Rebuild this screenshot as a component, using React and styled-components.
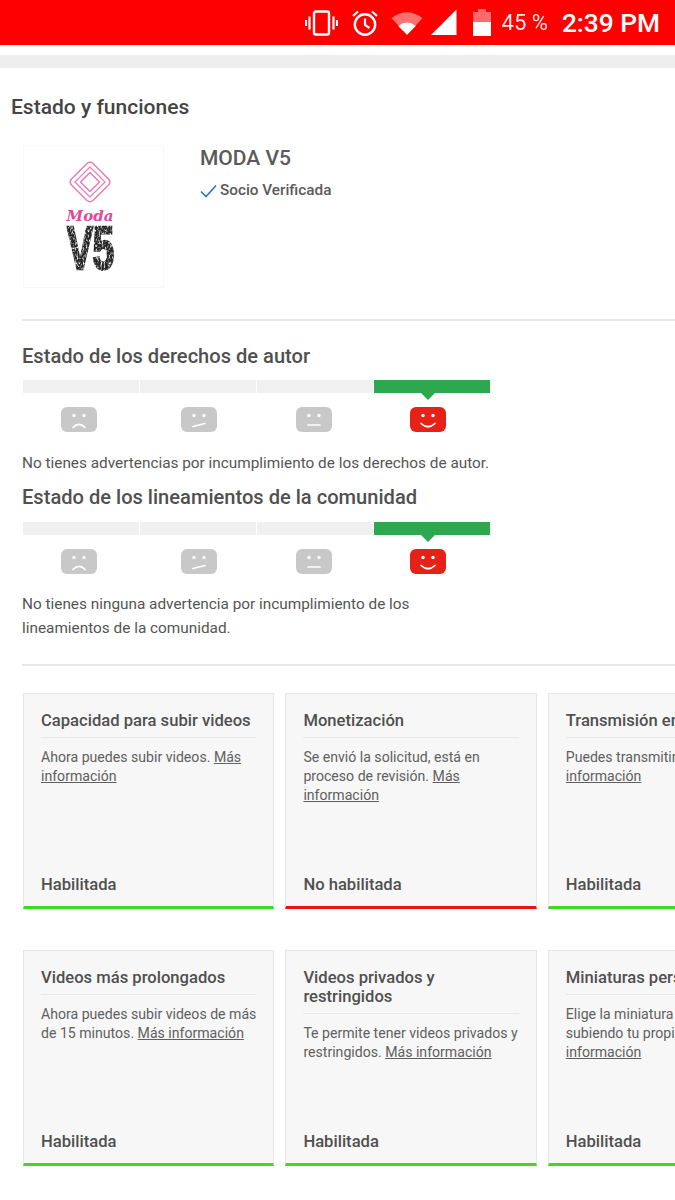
import React from 'react'
import styled, { createGlobalStyle } from 'styled-components'

const Global = createGlobalStyle`
html, body {
    margin: 0;
    background: #fff;
    overflow: hidden;
}
body {
    font-family: Roboto, "Liberation Sans", sans-serif;
    color: #4a4a4a;
}
`

const Page = styled.div`
width: 675px;
height: 1200px;
overflow: hidden;
`

const StatusBar = styled.div`
height: 45px;
background: #fe0000;
display: flex;
align-items: center;
justify-content: flex-end;
padding-right: 15px;
color: #fff;
`
const StatusIcon = styled.svg`
display: block;
flex: none;
margin-right: ${p => p.$gap}px;
`
const Percent = styled.span`
font-size: 22px;
margin-right: 14px;
opacity: .92;
`
const Clock = styled.span`
font-size: 26.3px;
font-weight: 500;
`

const Band = styled.div`
height: 13px;
margin-top: 10px;
background: #eeeeee;
`

const PageTitle = styled.h1`
margin: 27px 0 0 11px;
font-size: 21px;
line-height: 24px;
font-weight: 500;
color: #444;
`

const Content = styled.div`
padding-left: 22px;
`

const Profile = styled.div`
display: flex;
margin-top: 26px;
height: 174px;
border-bottom: 2px solid #e8e8e8;
`
const LogoBox = styled.div`
box-sizing: border-box;
width: 141px;
height: 143px;
margin-left: 1px;
padding-right: 7px;
border: 1px solid #f8f8f8;
display: flex;
flex-direction: column;
align-items: center;
`
const LogoMark = styled.svg`
display: block;
margin-top: 15px;
`
const LogoScript = styled.span`
font-family: "DejaVu Serif", serif;
font-style: italic;
font-weight: 700;
font-size: 15px;
line-height: 15px;
margin-top: 6px;
color: #dc4a9c;
`
const LogoV5 = styled.span`
font-family: "Liberation Sans", sans-serif;
font-weight: 700;
font-size: 61px;
line-height: 46px;
margin-top: 1px;
letter-spacing: -1px;
color: #262626;
-webkit-text-stroke: 2.5px #262626;
transform: scaleX(.64);
filter: url(#grunge);
`
const ProfileText = styled.div`
margin-left: 36px;
`
const ChannelName = styled.div`
margin-top: 1px;
font-size: 21px;
line-height: 24px;
font-weight: 500;
color: #5a5a5a;
`
const Verified = styled.div`
display: flex;
align-items: center;
gap: 3px;
margin-top: 10px;
font-size: 15.3px;
line-height: 21px;
font-weight: 500;
color: #5a5a5a;
`

const SectionTitle = styled.h2`
margin: ${p => p.$top}px 0 0;
font-size: 20.1px;
line-height: 24px;
font-weight: 500;
color: #505050;
`
const Meter = styled.div`
display: grid;
grid-template-columns: repeat(4, 116px);
column-gap: 1px;
margin: ${p => p.$top}px 0 0 1px;
width: 467px;
`
const Segment = styled.div`
position: relative;
height: 13px;
background: ${p => (p.$active ? '#2ea84f' : '#f0f0f0')};
${p => p.$active && `
&:after {
    content: "";
    position: absolute;
    left: 47px;
    top: 13px;
    border: 7px solid transparent;
    border-top-color: #2ea84f;
    border-bottom: 0;
}`}
`
const Face = styled.div`
display: flex;
padding: 14px 0 0 ${p => p.$left}px;
height: 25px;
`
const FaceIcon = styled.svg`
display: block;
`
const StatusText = styled.p`
margin: ${p => p.$top}px 0 0;
width: 470px;
font-size: 15.35px;
line-height: 24px;
color: #555;
`
const Divider = styled.div`
height: 2px;
margin-top: 24px;
background: #e8e8e8;
`

const CardRow = styled.div`
display: flex;
gap: 11px;
margin: ${p => p.$top}px 0 0 1px;
`
const Card = styled.div`
flex: none;
box-sizing: border-box;
width: 251.4px;
height: 216px;
padding: 0 17px;
background: #f7f7f7;
border: 1px solid #e6e6e6;
border-bottom: 3px solid ${p => (p.$off ? '#ee1111' : '#3fd91f')};
display: flex;
flex-direction: column;
`
const CardTitle = styled.div`
padding: 16.5px 0 7.5px;
font-size: 16.6px;
line-height: 19px;
font-weight: 500;
color: #505050;
border-bottom: 1px solid #e9e9e9;
white-space: pre-line;
`
const CardText = styled.div`
margin-top: 10px;
font-size: 14.1px;
line-height: 19px;
color: #606060;
white-space: pre-line;
`
const MoreLink = styled.span`
text-decoration: underline;
`
const CardState = styled.div`
margin-top: auto;
margin-bottom: 11.5px;
font-size: 16.6px;
line-height: 20px;
font-weight: 500;
color: #505050;
`

function MoodFace({ mood, on }) {
    const mouths = {
        sad: 'M12 20.5 Q18 14.5 24 20.5',
        skew: 'M12 19.5 L24 16.5',
        flat: 'M12 18 L24 18',
        happy: 'M11 16.5 Q18 23 25 16.5',
    }
    return (
        <FaceIcon width="36" height="25" viewBox="0 0 36 25">
            <rect width="36" height="25" rx="6" fill={on ? '#e62117' : '#c8c8c8'} />
            <circle cx="13" cy="8.5" r="1.7" fill="#fff" />
            <circle cx="23" cy="8.5" r="1.7" fill="#fff" />
            <path d={mouths[mood]} fill="none" stroke="#fff" strokeWidth="1.7" strokeLinecap="round" />
        </FaceIcon>
    )
}

const meterFaces = [
    { mood: 'sad', left: 38 },
    { mood: 'skew', left: 41 },
    { mood: 'flat', left: 39 },
    { mood: 'happy', left: 36 },
]

function StatusMeter({ top }) {
    return (
        <Meter $top={top}>
            {meterFaces.map(f => (
                <div key={f.mood}>
                    <Segment $active={f.mood === 'happy'} />
                    <Face $left={f.left}><MoodFace mood={f.mood} on={f.mood === 'happy'} /></Face>
                </div>
            ))}
        </Meter>
    )
}

function FeatureCard({ title, text, more, state, off }) {
    return (
        <Card $off={off}>
            <CardTitle>{title}</CardTitle>
            <CardText>{text}{more && <MoreLink>{more}</MoreLink>}</CardText>
            <CardState>{state}</CardState>
        </Card>
    )
}

export default function App() {
    return (
        <Page>
            <Global />
            <svg width="0" height="0" style={{ position: 'absolute' }}>
                <filter id="grunge" x="-10%" y="-10%" width="120%" height="120%">
                    <feTurbulence type="fractalNoise" baseFrequency="0.4" numOctaves="2" seed="4" result="n" />
                    <feColorMatrix in="n" type="matrix" values="0 0 0 0 0  0 0 0 0 0  0 0 0 0 0  0 0 0 -3 2.4" result="m" />
                    <feComposite in="SourceGraphic" in2="m" operator="in" />
                </filter>
            </svg>
            <StatusBar>
                <StatusIcon $gap={13} width="33" height="26" viewBox="0 0 33 26">
                    <rect x="9" y="1.5" width="15" height="23" rx="2" fill="none" stroke="#fff" strokeWidth="2.4" />
                    <path d="M4.5 6.5v13M28.5 6.5v13M1 10v6M32 10v6" stroke="#fff" strokeWidth="2.2" />
                </StatusIcon>
                <StatusIcon $gap={12} width="28" height="28" viewBox="0 0 28 28">
                    <circle cx="14" cy="15.5" r="10.2" fill="none" stroke="#fff" strokeWidth="2.4" />
                    <path d="M14 9.5v6.5l4.5 3M2 7l5-4.5M26 7l-5-4.5" fill="none" stroke="#fff" strokeWidth="2.2" />
                </StatusIcon>
                <StatusIcon $gap={8} width="32" height="26" viewBox="0 0 33 26">
                    <path d="M0.5 8 Q16.5 -4 32.5 8 L16.5 25 Z" fill="#ff7070" />
                    <path d="M7.5 16 Q16.5 9 25.5 16 L16.5 25 Z" fill="#fff" />
                </StatusIcon>
                <StatusIcon $gap={16} width="26" height="27" viewBox="0 0 27 27">
                    <path d="M0 26.5 L26.5 0 V26.5 Z" fill="#fff" />
                </StatusIcon>
                <StatusIcon $gap={11} width="18" height="27" viewBox="0 0 18 27">
                    <path d="M0 3 H5 V0 H13 V3 H18 V13 H0 Z" fill="#ff6b6b" />
                    <rect y="13" width="18" height="14" fill="#fff" />
                </StatusIcon>
                <Percent>45 %</Percent>
                <Clock>2:39 PM</Clock>
            </StatusBar>
            <Band />
            <PageTitle>Estado y funciones</PageTitle>
            <Content>
                <Profile>
                    <LogoBox>
                        <LogoMark width="42" height="42" viewBox="0 0 42 42">
                            <g fill="none" stroke="#e680b8" strokeLinejoin="round">
                                <path d="M18 2.5 Q21 0 24 2.5 L39.5 18 Q42 21 39.5 24 L24 39.5 Q21 42 18 39.5 L2.5 24 Q0 21 2.5 18 Z" strokeWidth="1.6" />
                                <path d="M21 6 L36 21 L21 36 L6 21 Z" strokeWidth="1.2" />
                                <path d="M21 11.5 L30.5 21 L21 30.5 L11.5 21 Z" strokeWidth="1.6" />
                            </g>
                        </LogoMark>
                        <LogoScript>Moda</LogoScript>
                        <LogoV5>V5</LogoV5>
                    </LogoBox>
                    <ProfileText>
                        <ChannelName>MODA V5</ChannelName>
                        <Verified>
                            <svg width="17" height="14" viewBox="0 0 17 14">
                                <path d="M1 7.5 L6 12.5 L16 1.5" fill="none" stroke="#2a77b8" strokeWidth="1.6" />
                            </svg>
                            Socio Verificada
                        </Verified>
                    </ProfileText>
                </Profile>
                <SectionTitle $top={23}>Estado de los derechos de autor</SectionTitle>
                <StatusMeter top={12} />
                <StatusText $top={19}>No tienes advertencias por incumplimiento de los derechos de autor.</StatusText>
                <SectionTitle $top={10}>Estado de los lineamientos de la comunidad</SectionTitle>
                <StatusMeter top={13} />
                <StatusText $top={18}>No tienes ninguna advertencia por incumplimiento de los lineamientos de la comunidad.</StatusText>
                <Divider />
                <CardRow $top={27}>
                    <FeatureCard title="Capacidad para subir videos" text={'Ahora puedes subir videos. '} more="Más información" state="Habilitada" />
                    <FeatureCard title="Monetización" text={'Se envió la solicitud, está en\nproceso de revisión. '} more="Más información" state="No habilitada" off />
                    <FeatureCard title="Transmisión en vivo" text={'Puedes transmitir en vivo. '} more="Más información" state="Habilitada" />
                </CardRow>
                <CardRow $top={41}>
                    <FeatureCard title="Videos más prolongados" text={'Ahora puedes subir videos de más\nde 15 minutos. '} more="Más información" state="Habilitada" />
                    <FeatureCard title={'Videos privados y\nrestringidos'} text={'Te permite tener videos privados y\nrestringidos. '} more="Más información" state="Habilitada" />
                    <FeatureCard title="Miniaturas personalizadas" text={'Elige la miniatura de tu video\nsubiendo tu propia imagen. '} more="Más información" state="Habilitada" />
                </CardRow>
            </Content>
        </Page>
    )
}
